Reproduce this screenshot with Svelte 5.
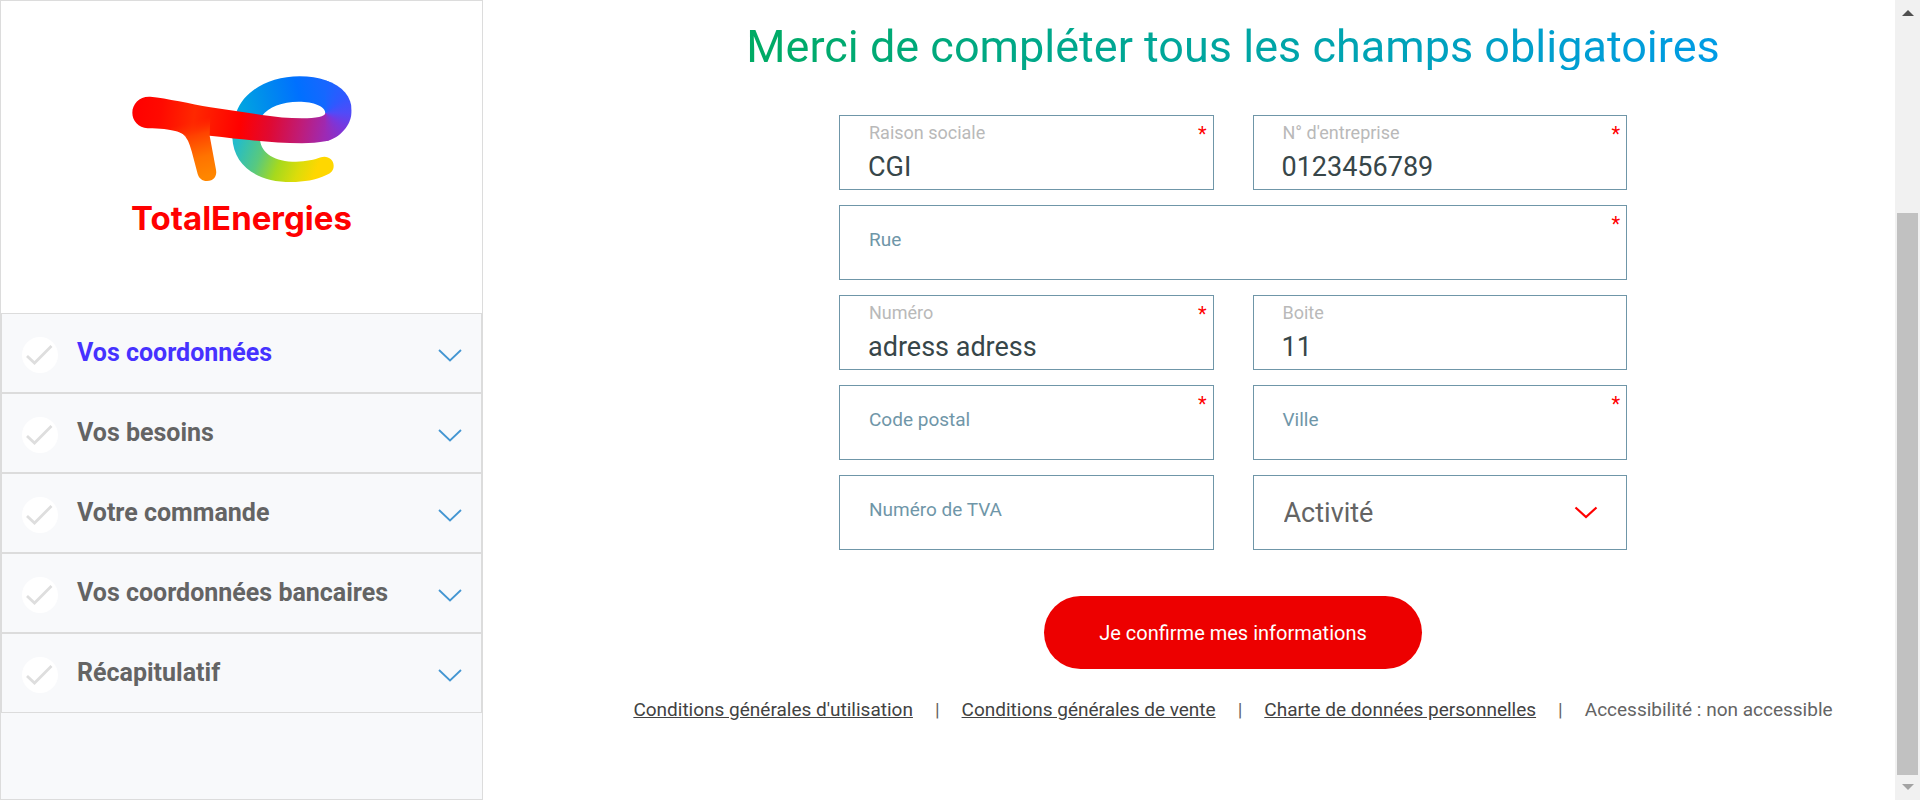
<script lang="ts">
  const steps = [
    { label: 'Vos coordonnées', active: true },
    { label: 'Vos besoins', active: false },
    { label: 'Votre commande', active: false },
    { label: 'Vos coordonnées bancaires', active: false },
    { label: 'Récapitulatif', active: false },
  ];

  let fields = $state([
    { id: 'company', label: 'Raison sociale', value: 'CGI', required: true, wide: false },
    { id: 'company-number', label: "N° d'entreprise", value: '0123456789', required: true, wide: false },
    { id: 'street', label: 'Rue', value: '', required: true, wide: true },
    { id: 'number', label: 'Numéro', value: 'adress adress', required: true, wide: false },
    { id: 'box', label: 'Boite', value: '11', required: false, wide: false },
    { id: 'postcode', label: 'Code postal', value: '', required: true, wide: false },
    { id: 'city', label: 'Ville', value: '', required: true, wide: false },
    { id: 'vat', label: 'Numéro de TVA', value: '', required: false, wide: false },
  ]);

  const links = [
    "Conditions générales d'utilisation",
    'Conditions générales de vente',
    'Charte de données personnelles',
  ];
</script>

<div class="page">
  <aside class="sidebar">
    <div class="brand">
      <svg class="mark" viewBox="66 49 658 318" aria-hidden="true">
        <defs>
          <linearGradient id="bar" gradientUnits="userSpaceOnUse" x1="66" y1="140" x2="646" y2="220">
            <stop offset="0" stop-color="#ff0000" />
            <stop offset="0.15" stop-color="#ff0a00" />
            <stop offset="0.32" stop-color="#ff2800" />
            <stop offset="0.44" stop-color="#ff1400" />
            <stop offset="0.56" stop-color="#ff0000" />
            <stop offset="0.72" stop-color="#de0a35" />
            <stop offset="0.88" stop-color="#bd1d7c" />
            <stop offset="1" stop-color="#9d2ab4" />
          </linearGradient>
          <linearGradient id="leg" gradientUnits="userSpaceOnUse" x1="245" y1="185" x2="290" y2="350">
            <stop offset="0" stop-color="#ff2d00" stop-opacity="0" />
            <stop offset="0.25" stop-color="#ff4200" />
            <stop offset="0.65" stop-color="#ff7300" />
            <stop offset="1" stop-color="#ff8600" />
          </linearGradient>
          <linearGradient id="top" gradientUnits="userSpaceOnUse" x1="385" y1="150" x2="646" y2="90">
            <stop offset="0" stop-color="#00a6e0" />
            <stop offset="0.35" stop-color="#008aee" />
            <stop offset="0.7" stop-color="#0070ff" />
            <stop offset="1" stop-color="#1767ff" />
          </linearGradient>
          <linearGradient id="tail" gradientUnits="userSpaceOnUse" x1="385" y1="230" x2="650" y2="330">
            <stop offset="0" stop-color="#22bccb" />
            <stop offset="0.28" stop-color="#58c97f" />
            <stop offset="0.5" stop-color="#a6d91d" />
            <stop offset="0.72" stop-color="#dcdc0a" />
            <stop offset="0.9" stop-color="#ffd700" />
          </linearGradient>
          <clipPath id="bend">
            <path d="M645 62C698 79 724 112 724 153C724 195 690 235 645 245V160Z" />
          </clipPath>
        </defs>
        <path fill="url(#top)" d="M378 158C402 92 478 50 568 50C598 50 624 54 646 62L656 66V160H645C645 140 610 126 565 126C515 126 475 142 455 168Z" />
        <path fill="url(#tail)" d="M366 234L449 240C453 282 494 306 557 306C587 306 613 300 632 293C651 287 670 299 670 318C670 332 662 340 648 346C617 361 580 367 543 367C439 367 370 318 366 234Z" />
        <path fill="url(#bar)" d="M120 111C170 116 240 132 300 143L455 166C495 172 535 176 575 176C618 176 645 170 645 160H656V242L645 245C625 249 601 251 575 251C482 250 400 239 298 228L230 232C215 218 190 207 112 206C84 203 66 184 66 159C66 132 88 109 120 111Z" />
        <path fill="url(#leg)" d="M180 170H300L298 228L317 330C321 350 309 364 290 364C275 364 266 356 262 343L244 275C236 244 224 213 180 209Z" />
        <g clip-path="url(#bend)">
          <foreignObject x="635" y="49" width="90" height="205">
            <div class="bend"></div>
          </foreignObject>
        </g>
      </svg>
      <span class="wordmark">TotalEnergies</span>
    </div>
    <nav class="steps" aria-label="Étapes">
      {#each steps as step}
        <button type="button" class="step" class:active={step.active}>
          <svg class="tick" viewBox="0 0 36 36" aria-hidden="true">
            <circle cx="18" cy="18" r="18" fill="#fff" />
            <path d="M5 19L12.500 26L29.500 9" fill="none" stroke="#dedede" stroke-width="2.800" />
          </svg>
          <span class="step-label">{step.label}</span>
          <svg class="chevron" viewBox="0 0 24 13" aria-hidden="true">
            <path d="M1 1L12 11.500L23 1" fill="none" stroke="#4496d2" stroke-width="1.800" />
          </svg>
        </button>
      {/each}
    </nav>
  </aside>

  <main>
    <h1>Merci de compléter tous les champs obligatoires</h1>
    <form onsubmit={(e) => e.preventDefault()}>
      <div class="grid">
        {#each fields as field}
          <div class="field" class:wide={field.wide} class:filled={field.value !== ''}>
            <label for={field.id}>{field.label}</label>
            <input id={field.id} type="text" bind:value={field.value} />
            {#if field.required}<span class="required">*</span>{/if}
          </div>
        {/each}
        <div class="field">
          <select aria-label="Activité">
            <option>Activité</option>
          </select>
          <svg class="select-arrow" viewBox="0 0 24 13" aria-hidden="true">
            <path d="M1.500 1.500L12 11L22.500 1.500" fill="none" stroke="#ff0000" stroke-width="2.200" />
          </svg>
        </div>
      </div>
      <button type="submit" class="confirm">Je confirme mes informations</button>
    </form>
    <footer>
      {#each links as link}
        <a href="#top">{link}</a>
        <span class="bar">|</span>
      {/each}
      <span>Accessibilité : non accessible</span>
    </footer>
  </main>

  <div class="scrollbar" aria-hidden="true">
    <svg class="arrow" viewBox="0 0 12 6"><path d="M0 6L6 0L12 6Z" fill="#505050" /></svg>
    <div class="track"><div class="thumb"></div></div>
    <svg class="arrow" viewBox="0 0 12 6"><path d="M0 0L6 6L12 0Z" fill="#a3a3a3" /></svg>
  </div>
</div>

<style>
  :global(body) {
    font-family: Roboto, "Liberation Sans", sans-serif;
    color: #374649;
    background: #fff;
  }

  .page {
    display: flex;
    min-height: 100vh;
  }

  .page,
  .page * {
    box-sizing: border-box;
  }

  .sidebar {
    flex: 0 0 483px;
    display: flex;
    flex-direction: column;
    background: #f8f9fb;
    border: 1px solid #dcdcdc;
  }

  .brand {
    display: flex;
    flex-direction: column;
    align-items: center;
    gap: 12px;
    height: 312px;
    padding-top: 75px;
    background: #fff;
  }

  .mark {
    display: block;
    width: 220px;
    height: 106px;
  }

  .bend {
    width: 100%;
    height: 100%;
    background: conic-gradient(from 0deg at 10px 111px, #1767ff 0deg, #3058ff 50deg, #514bf8 90deg, #7638e0 125deg, #9d2ab4 180deg, #9d2ab4 270deg, #1767ff 270deg);
  }

  .wordmark {
    font-family: Inter, sans-serif;
    font-weight: 700;
    font-size: 33px;
    line-height: 48px;
    color: #ff0000;
  }

  .step {
    display: flex;
    align-items: center;
    width: 100%;
    height: 80px;
    padding: 0 19px 0 20px;
    border: 1px solid #dcdcdc;
    background: transparent;
    font-family: inherit;
    font-size: 25px;
    font-weight: 700;
    color: #646464;
    text-align: left;
  }

  .step.active {
    color: #4632ff;
  }

  .tick {
    width: 36px;
    height: 36px;
    margin-top: 4px;
  }

  .step-label {
    flex: 1;
    padding: 0 0 2px 19px;
  }

  .chevron {
    width: 24px;
    height: 13px;
    margin-top: 4px;
  }

  main {
    flex: 1;
    display: flex;
    flex-direction: column;
    align-items: center;
    padding: 24px 0 0 88px;
  }

  h1 {
    margin: 0;
    font-size: 45px;
    line-height: 46px;
    font-weight: 400;
    color: transparent;
    background: linear-gradient(100deg, #00ab63, #00a5a8 55%, #009be6);
    background-clip: text;
  }

  form {
    display: flex;
    flex-direction: column;
    align-items: center;
    width: 100%;
    max-width: 788px;
    padding-top: 45px;
  }

  .grid {
    display: grid;
    grid-template-columns: 1fr 1fr;
    gap: 15px 39px;
    width: 100%;
  }

  .field {
    position: relative;
    height: 75px;
    border: 1px solid #6f96a8;
  }

  .wide {
    grid-column: 1 / -1;
  }

  label {
    position: absolute;
    left: 29px;
    top: 23px;
    font-size: 19px;
    line-height: 22px;
    color: #6f96a8;
    pointer-events: none;
  }

  .filled label {
    top: 6px;
    font-size: 18px;
    color: #b9b9b9;
  }

  input,
  select {
    width: 100%;
    height: 100%;
    margin: 0;
    border: 0;
    outline: 0;
    background: transparent;
    font-family: inherit;
    font-size: 27px;
    color: #374649;
  }

  input {
    padding: 28px 28px 0;
  }

  select {
    appearance: none;
    padding: 0 60px 0 30px;
    color: #646464;
  }

  .select-arrow {
    position: absolute;
    right: 28px;
    top: 30px;
    width: 24px;
    height: 13px;
    pointer-events: none;
  }

  .required {
    position: absolute;
    right: 6px;
    top: 7px;
    font-size: 20px;
    line-height: 22px;
    color: #ff0000;
  }

  .confirm {
    margin-top: 46px;
    height: 73px;
    padding: 0 55px;
    border: 0;
    border-radius: 37px;
    background: #ed0000;
    font-family: inherit;
    font-size: 20px;
    font-weight: 400;
    color: #fff;
  }

  footer {
    display: flex;
    gap: 22px;
    padding: 28px 0;
    font-size: 19px;
    line-height: 26px;
    color: #646464;
    white-space: nowrap;
  }

  footer a {
    color: #424242;
  }

  .scrollbar {
    flex: 0 0 25px;
    display: flex;
    flex-direction: column;
    align-items: center;
    padding: 10px 0;
    background: #f1f1f1;
  }

  .arrow {
    width: 12px;
    height: 6px;
  }

  .track {
    flex: 1;
    display: flex;
    flex-direction: column;
    justify-content: flex-end;
    padding: 9px 0;
  }

  .thumb {
    width: 21px;
    height: 75%;
    background: #c1c1c1;
  }
</style>
